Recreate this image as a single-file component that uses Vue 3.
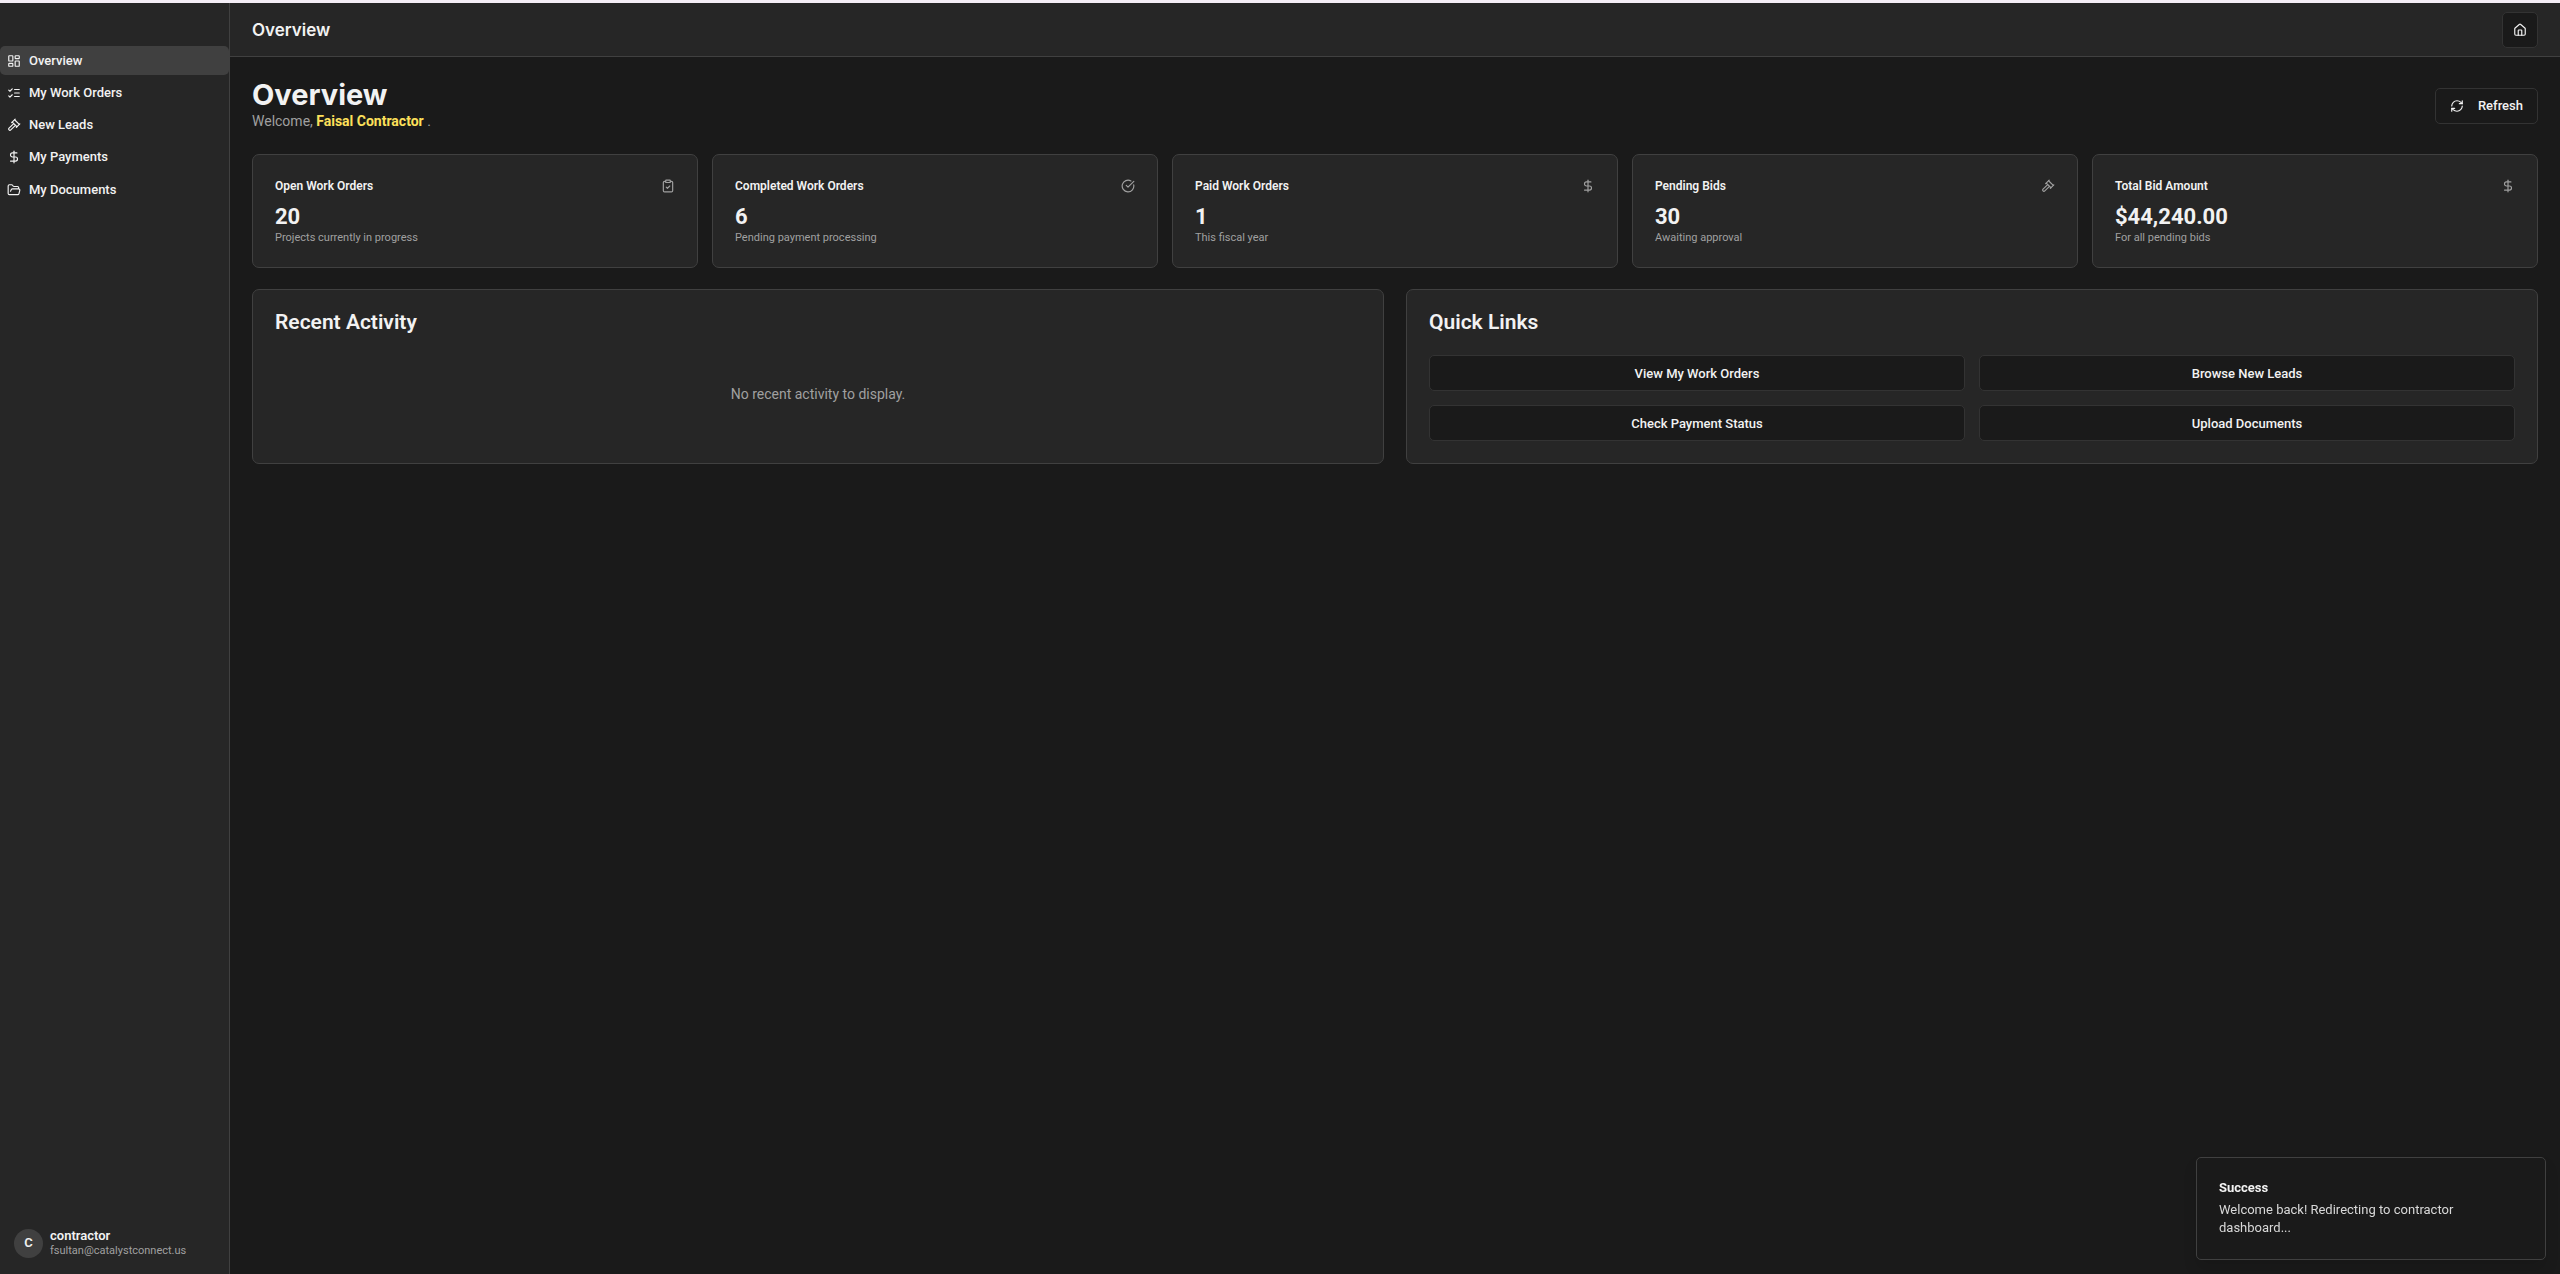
<template>
  <div class="page">
    <!-- 1) Sidebar -->
    <aside class="sidebar">
      <nav class="menu">
        <a
          v-for="item in menu"
          :key="item.label"
          href="#"
          class="menu-item"
          :class="{ active: item.label === current }"
          @click.prevent="current = item.label"
        >
          <svg class="icon" viewBox="0 0 24 24">
            <path v-for="d in icons[item.icon]" :key="d" :d="d" />
          </svg>
          <span>{{ item.label }}</span>
        </a>
      </nav>

      <div class="user">
        <span class="avatar">C</span>
        <div class="user-text">
          <p class="user-name">contractor</p>
          <p class="user-email">fsultan@catalystconnect.us</p>
        </div>
      </div>
    </aside>

    <div class="content">
      <!-- 2) Top bar -->
      <header class="topbar">
        <p class="topbar-title">Overview</p>
        <button type="button" class="btn btn-icon" aria-label="Home">
          <svg class="icon" viewBox="0 0 24 24">
            <path v-for="d in icons.home" :key="d" :d="d" />
          </svg>
        </button>
      </header>

      <main class="main">
        <div class="heading">
          <div>
            <h1>Overview</h1>
            <p class="welcome">Welcome, <strong>Faisal Contractor</strong> .</p>
          </div>
          <button type="button" class="btn btn-refresh">
            <svg class="icon" viewBox="0 0 24 24">
              <path v-for="d in icons.refresh" :key="d" :d="d" />
            </svg>
            Refresh
          </button>
        </div>

        <!-- 3) Stats -->
        <section class="stats">
          <article v-for="stat in stats" :key="stat.title" class="card">
            <div class="stat-head">
              <h3>{{ stat.title }}</h3>
              <svg class="icon" viewBox="0 0 24 24">
                <path v-for="d in icons[stat.icon]" :key="d" :d="d" />
              </svg>
            </div>
            <p class="stat-value">{{ stat.value }}</p>
            <p class="stat-note">{{ stat.note }}</p>
          </article>
        </section>

        <!-- 4) Activity + links -->
        <section class="panels">
          <article class="card">
            <h2>Recent Activity</h2>
            <p class="empty">No recent activity to display.</p>
          </article>
          <article class="card">
            <h2>Quick Links</h2>
            <div class="links">
              <button v-for="link in links" :key="link" type="button" class="btn">
                {{ link }}
              </button>
            </div>
          </article>
        </section>
      </main>
    </div>

    <!-- 5) Toast -->
    <div class="toast" role="status">
      <p class="toast-title">Success</p>
      <p class="toast-text">Welcome back! Redirecting to contractor dashboard...</p>
    </div>
  </div>
</template>

<script setup>
import { ref } from 'vue'

const current = ref('Overview')

const menu = [
  { label: 'Overview', icon: 'dashboard' },
  { label: 'My Work Orders', icon: 'checks' },
  { label: 'New Leads', icon: 'gavel' },
  { label: 'My Payments', icon: 'dollar' },
  { label: 'My Documents', icon: 'folder' },
]

const stats = [
  { title: 'Open Work Orders', value: '20', note: 'Projects currently in progress', icon: 'clipboard' },
  { title: 'Completed Work Orders', value: '6', note: 'Pending payment processing', icon: 'circleCheck' },
  { title: 'Paid Work Orders', value: '1', note: 'This fiscal year', icon: 'dollar' },
  { title: 'Pending Bids', value: '30', note: 'Awaiting approval', icon: 'gavel' },
  { title: 'Total Bid Amount', value: '$44,240.00', note: 'For all pending bids', icon: 'dollar' },
]

const links = ['View My Work Orders', 'Browse New Leads', 'Check Payment Status', 'Upload Documents']

// stroke paths on a 24x24 grid
const icons = {
  dashboard: [
    'M4 3h5a1 1 0 0 1 1 1v7a1 1 0 0 1-1 1H4a1 1 0 0 1-1-1V4a1 1 0 0 1 1-1z',
    'M15 3h5a1 1 0 0 1 1 1v3a1 1 0 0 1-1 1h-5a1 1 0 0 1-1-1V4a1 1 0 0 1 1-1z',
    'M15 12h5a1 1 0 0 1 1 1v7a1 1 0 0 1-1 1h-5a1 1 0 0 1-1-1v-7a1 1 0 0 1 1-1z',
    'M4 16h5a1 1 0 0 1 1 1v3a1 1 0 0 1-1 1H4a1 1 0 0 1-1-1v-3a1 1 0 0 1 1-1z',
  ],
  checks: ['m3 17 2 2 4-4', 'm3 7 2 2 4-4', 'M13 6h8', 'M13 12h8', 'M13 18h8'],
  gavel: [
    'm14.5 12.5-8 8a2.119 2.119 0 1 1-3-3l8-8',
    'm16 16 6-6',
    'm8 8 6-6',
    'm9 7 8 8',
    'm21 11-8-8',
  ],
  dollar: ['M12 2v20', 'M17 5H9.5a3.5 3.5 0 0 0 0 7h5a3.5 3.5 0 0 1 0 7H6'],
  folder: [
    'm6 14 1.5-2.9A2 2 0 0 1 9.24 10H20a2 2 0 0 1 1.94 2.5l-1.54 6a2 2 0 0 1-1.95 1.5H4a2 2 0 0 1-2-2V5a2 2 0 0 1 2-2h3.9a2 2 0 0 1 1.69.9l.81 1.2a2 2 0 0 0 1.67.9H18a2 2 0 0 1 2 2v2',
  ],
  clipboard: [
    'M9 2h6a1 1 0 0 1 1 1v2a1 1 0 0 1-1 1H9a1 1 0 0 1-1-1V3a1 1 0 0 1 1-1z',
    'M16 4h2a2 2 0 0 1 2 2v14a2 2 0 0 1-2 2H6a2 2 0 0 1-2-2V6a2 2 0 0 1 2-2h2',
    'm9 14 2 2 4-4',
  ],
  circleCheck: ['M21.801 10A10 10 0 1 1 17 3.335', 'm9 11 3 3L22 4'],
  home: [
    'M15 21v-8a1 1 0 0 0-1-1h-4a1 1 0 0 0-1 1v8',
    'M3 10a2 2 0 0 1 .709-1.528l7-5.999a2 2 0 0 1 2.582 0l7 5.999A2 2 0 0 1 21 10v9a2 2 0 0 1-2 2H5a2 2 0 0 1-2-2z',
  ],
  refresh: [
    'M3 12a9 9 0 0 1 9-9 9.75 9.75 0 0 1 6.74 2.74L21 8',
    'M21 3v5h-5',
    'M21 12a9 9 0 0 1-9 9 9.75 9.75 0 0 1-6.74-2.74L3 16',
    'M8 16H3v5',
  ],
}
</script>

<style>
body {
  margin: 0;
  background: #1a1a1a;
}
</style>

<style scoped>
.page {
  display: flex;
  box-sizing: border-box;
  min-height: 100vh;
  border-top: 3px solid #f4eef6;
  background: #1a1a1a;
  color: #f2f2f2;
  font-family: Roboto, "Liberation Sans", sans-serif;
  font-size: 13px;
  line-height: 18px;
}

h1,
h2,
h3,
p {
  margin: 0;
}

.icon {
  flex: none;
  width: 14px;
  height: 14px;
  fill: none;
  stroke: currentColor;
  stroke-width: 2;
  stroke-linecap: round;
  stroke-linejoin: round;
}

/* Sidebar */
.sidebar {
  display: flex;
  flex-direction: column;
  justify-content: space-between;
  box-sizing: border-box;
  flex: none;
  width: 230px;
  padding-top: 43px;
  border-right: 1px solid #404040;
  background: #262626;
}

.menu {
  display: grid;
  align-content: space-between;
  height: 158px;
}

.menu-item {
  display: flex;
  align-items: center;
  gap: 8px;
  height: 29px;
  padding: 0 7px;
  border-radius: 5px;
  color: #f2f2f2;
  font-weight: 500;
  text-decoration: none;
}

.menu-item.active {
  background: #404040;
}

.user {
  display: flex;
  align-items: center;
  gap: 7px;
  padding: 14px 14px 16px;
}

.avatar {
  display: flex;
  align-items: center;
  justify-content: center;
  width: 29px;
  height: 29px;
  border-radius: 50%;
  background: #404040;
  font-weight: 600;
}

.user-name {
  line-height: 16px;
  font-weight: 600;
}

.user-email {
  color: #a0a0a0;
  font-size: 11px;
  line-height: 14px;
}

/* Top bar */
.content {
  flex: 1;
  min-width: 0;
}

.topbar {
  display: flex;
  align-items: center;
  justify-content: space-between;
  height: 53px;
  padding: 0 22px;
  border-bottom: 1px solid #404040;
  background: #262626;
}

.topbar-title,
h1 {
  font-family: Inter, "Open Sans", sans-serif;
}

.topbar-title {
  font-size: 17px;
  font-weight: 600;
}

.btn {
  display: flex;
  align-items: center;
  justify-content: center;
  height: 36px;
  padding: 0 14px;
  border: 1px solid #333;
  border-radius: 5px;
  background: #1a1a1a;
  color: #f2f2f2;
  font-family: inherit;
  font-size: 13px;
  font-weight: 500;
  cursor: pointer;
}

.btn-icon {
  width: 36px;
  padding: 0;
}

.btn-refresh {
  gap: 14px;
}

/* Main */
.main {
  padding: 22px;
}

.heading {
  display: flex;
  align-items: center;
  justify-content: space-between;
  margin-bottom: 22px;
}

h1 {
  font-size: 29px;
  line-height: 32px;
  font-weight: 700;
}

.welcome {
  color: #a0a0a0;
  font-size: 14px;
  line-height: 21px;
}

.welcome strong {
  color: #fde05a;
  font-weight: 700;
}

.stats {
  display: grid;
  grid-template-columns: repeat(5, 1fr);
  gap: 14px;
  margin-bottom: 21px;
}

.card {
  padding: 22px;
  border: 1px solid #404040;
  border-radius: 7px;
  background: #262626;
}

.stat-head {
  display: flex;
  align-items: center;
  justify-content: space-between;
  margin-bottom: 7px;
}

.stat-head h3 {
  font-size: 12px;
  font-weight: 600;
}

.stat-head .icon {
  color: #a0a0a0;
}

.stat-value {
  font-size: 22px;
  line-height: 29px;
  font-weight: 700;
}

.stat-note {
  color: #a0a0a0;
  font-size: 11px;
  line-height: 14px;
}

.panels {
  display: grid;
  grid-template-columns: repeat(2, 1fr);
  gap: 22px;
}

h2 {
  margin-bottom: 22px;
  font-size: 21px;
  line-height: 21px;
  font-weight: 600;
}

.empty {
  padding: 29px 0;
  color: #a0a0a0;
  font-size: 14px;
  line-height: 21px;
  text-align: center;
}

.links {
  display: grid;
  grid-template-columns: repeat(2, 1fr);
  gap: 14px;
}

/* Toast */
.toast {
  position: fixed;
  right: 14px;
  bottom: 14px;
  box-sizing: border-box;
  width: 350px;
  padding: 22px;
  border: 1px solid #404040;
  border-radius: 5px;
  background: #1a1a1a;
  box-shadow: 0 9px 14px rgba(0, 0, 0, 0.1);
}

.toast-title {
  margin-bottom: 5px;
  line-height: 16px;
  font-weight: 700;
}

.toast-text {
  max-width: 260px;
  color: #d8d8d8;
}
</style>
